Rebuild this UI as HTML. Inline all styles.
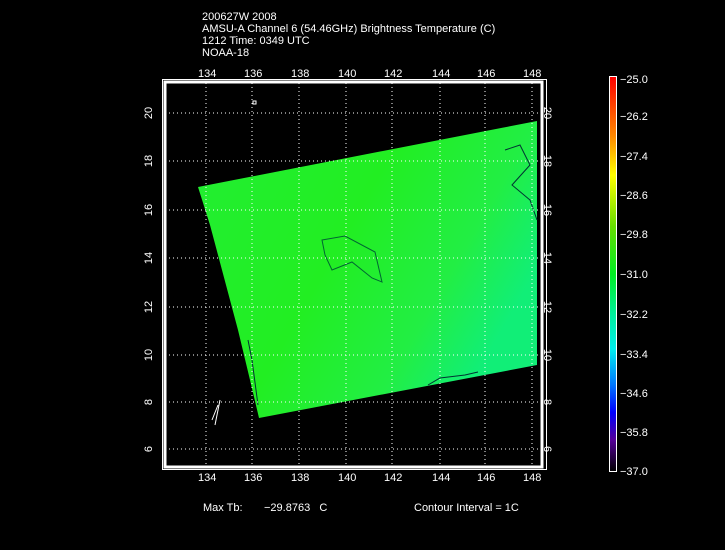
<!DOCTYPE html>
<html><head><style>
body{margin:0;background:#000;width:725px;height:550px;overflow:hidden;font-family:"Liberation Sans",sans-serif;color:#fff}
.t{position:absolute;font-size:11px;line-height:12px;white-space:pre}
</style></head><body>
<div class="t" style="left:202px;top:11px">200627W 2008
AMSU-A Channel 6 (54.46GHz) Brightness Temperature (C)
1212 Time: 0349 UTC
NOAA-18</div>
<svg width="725" height="550" style="position:absolute;left:0;top:0" font-family="Liberation Sans" font-size="11" fill="#fff">
<defs>
<linearGradient id="g" x1="0" y1="0" x2="1" y2="0.5">
<stop offset="0" stop-color="#22ee33"/><stop offset="0.5" stop-color="#22ee22"/><stop offset="0.8" stop-color="#22ee44"/><stop offset="1" stop-color="#11ee77"/></linearGradient>
<linearGradient id="cb" x1="0" y1="0" x2="0" y2="1">
<stop offset="0" stop-color="#ff0000"/><stop offset="0.15" stop-color="#ff8800"/><stop offset="0.25" stop-color="#ffff00"/><stop offset="0.38" stop-color="#66dd00"/><stop offset="0.5" stop-color="#00ee22"/><stop offset="0.6" stop-color="#00ee99"/><stop offset="0.69" stop-color="#00eeee"/><stop offset="0.78" stop-color="#0077ff"/><stop offset="0.85" stop-color="#0000ff"/><stop offset="0.92" stop-color="#550099"/><stop offset="1" stop-color="#000000"/></linearGradient>
</defs>
<path d="M198,187 L537,121 L537,365 L259,418 L250,380 L238,330 L222,270 L210,225 Z" fill="url(#g)"/>
<path d="M322,240 L345,236 L375,252 L382,282 L372,278 L352,262 L332,270 L325,255 Z" fill="none" stroke="#063" stroke-width="1"/>
<path d="M248,340 L252,360 L256,390 L258,405" fill="none" stroke="#033" stroke-width="1"/>
<path d="M505,150 L520,145 L530,165 L512,185 L530,200 L537,220" fill="none" stroke="#033" stroke-width="1"/>
<path d="M428,385 L440,378 L465,375 L478,372" fill="none" stroke="#033" stroke-width="1"/>
<g stroke="#fff" stroke-dasharray="1,3" stroke-width="1">
<line x1="206" y1="83" x2="206" y2="466"/><line x1="252" y1="83" x2="252" y2="466"/><line x1="299" y1="83" x2="299" y2="466"/><line x1="346" y1="83" x2="346" y2="466"/><line x1="392" y1="83" x2="392" y2="466"/><line x1="440" y1="83" x2="440" y2="466"/><line x1="485" y1="83" x2="485" y2="466"/><line x1="532" y1="83" x2="532" y2="466"/>
<line x1="165" y1="113" x2="543" y2="113"/><line x1="165" y1="161" x2="543" y2="161"/><line x1="165" y1="210" x2="543" y2="210"/><line x1="165" y1="258" x2="543" y2="258"/><line x1="165" y1="307" x2="543" y2="307"/><line x1="165" y1="355" x2="543" y2="355"/><line x1="165" y1="402" x2="543" y2="402"/><line x1="165" y1="449" x2="543" y2="449"/>
</g>
<rect x="162.5" y="79.5" width="384" height="390" fill="none" stroke="#fff"/>
<rect x="165" y="82" width="377" height="385" fill="none" stroke="#fff" stroke-width="3"/>
<path d="M215,425 L220,400 M212,420 L218,405" stroke="#fff" fill="none"/>
<rect x="253" y="101" width="3" height="3" fill="none" stroke="#fff"/>
<g>
<text x="198" y="77">134</text><text x="244" y="77">136</text><text x="291" y="77">138</text><text x="338" y="77">140</text><text x="384" y="77">142</text><text x="432" y="77">144</text><text x="477" y="77">146</text><text x="523" y="77">148</text>
<text x="198" y="481">134</text><text x="244" y="481">136</text><text x="291" y="481">138</text><text x="338" y="481">140</text><text x="384" y="481">142</text><text x="432" y="481">144</text><text x="477" y="481">146</text><text x="523" y="481">148</text>
</g>
<g font-size="11">
<text transform="translate(152,113) rotate(-90)" text-anchor="middle">20</text><text transform="translate(152,161) rotate(-90)" text-anchor="middle">18</text><text transform="translate(152,210) rotate(-90)" text-anchor="middle">16</text><text transform="translate(152,258) rotate(-90)" text-anchor="middle">14</text><text transform="translate(152,307) rotate(-90)" text-anchor="middle">12</text><text transform="translate(152,355) rotate(-90)" text-anchor="middle">10</text><text transform="translate(152,402) rotate(-90)" text-anchor="middle">8</text><text transform="translate(152,449) rotate(-90)" text-anchor="middle">6</text>
<text transform="translate(544,113) rotate(90)" text-anchor="middle">20</text><text transform="translate(544,161) rotate(90)" text-anchor="middle">18</text><text transform="translate(544,210) rotate(90)" text-anchor="middle">16</text><text transform="translate(544,258) rotate(90)" text-anchor="middle">14</text><text transform="translate(544,307) rotate(90)" text-anchor="middle">12</text><text transform="translate(544,355) rotate(90)" text-anchor="middle">10</text><text transform="translate(544,402) rotate(90)" text-anchor="middle">8</text><text transform="translate(544,449) rotate(90)" text-anchor="middle">6</text>
</g>
<rect x="609.5" y="76.5" width="7" height="395" fill="url(#cb)" stroke="#fff"/>
<g font-size="11">
<text x="620" y="83">−25.0</text><text x="620" y="120">−26.2</text><text x="620" y="160">−27.4</text><text x="620" y="199">−28.6</text><text x="620" y="238">−29.8</text><text x="620" y="278">−31.0</text><text x="620" y="318">−32.2</text><text x="620" y="358">−33.4</text><text x="620" y="397">−34.6</text><text x="620" y="436">−35.8</text><text x="620" y="475">−37.0</text>
</g>
<text x="203" y="511">Max Tb:</text><text x="264" y="511" xml:space="preserve">−29.8763   C</text><text x="414" y="511">Contour Interval = 1C</text>
</svg>
</body></html>
